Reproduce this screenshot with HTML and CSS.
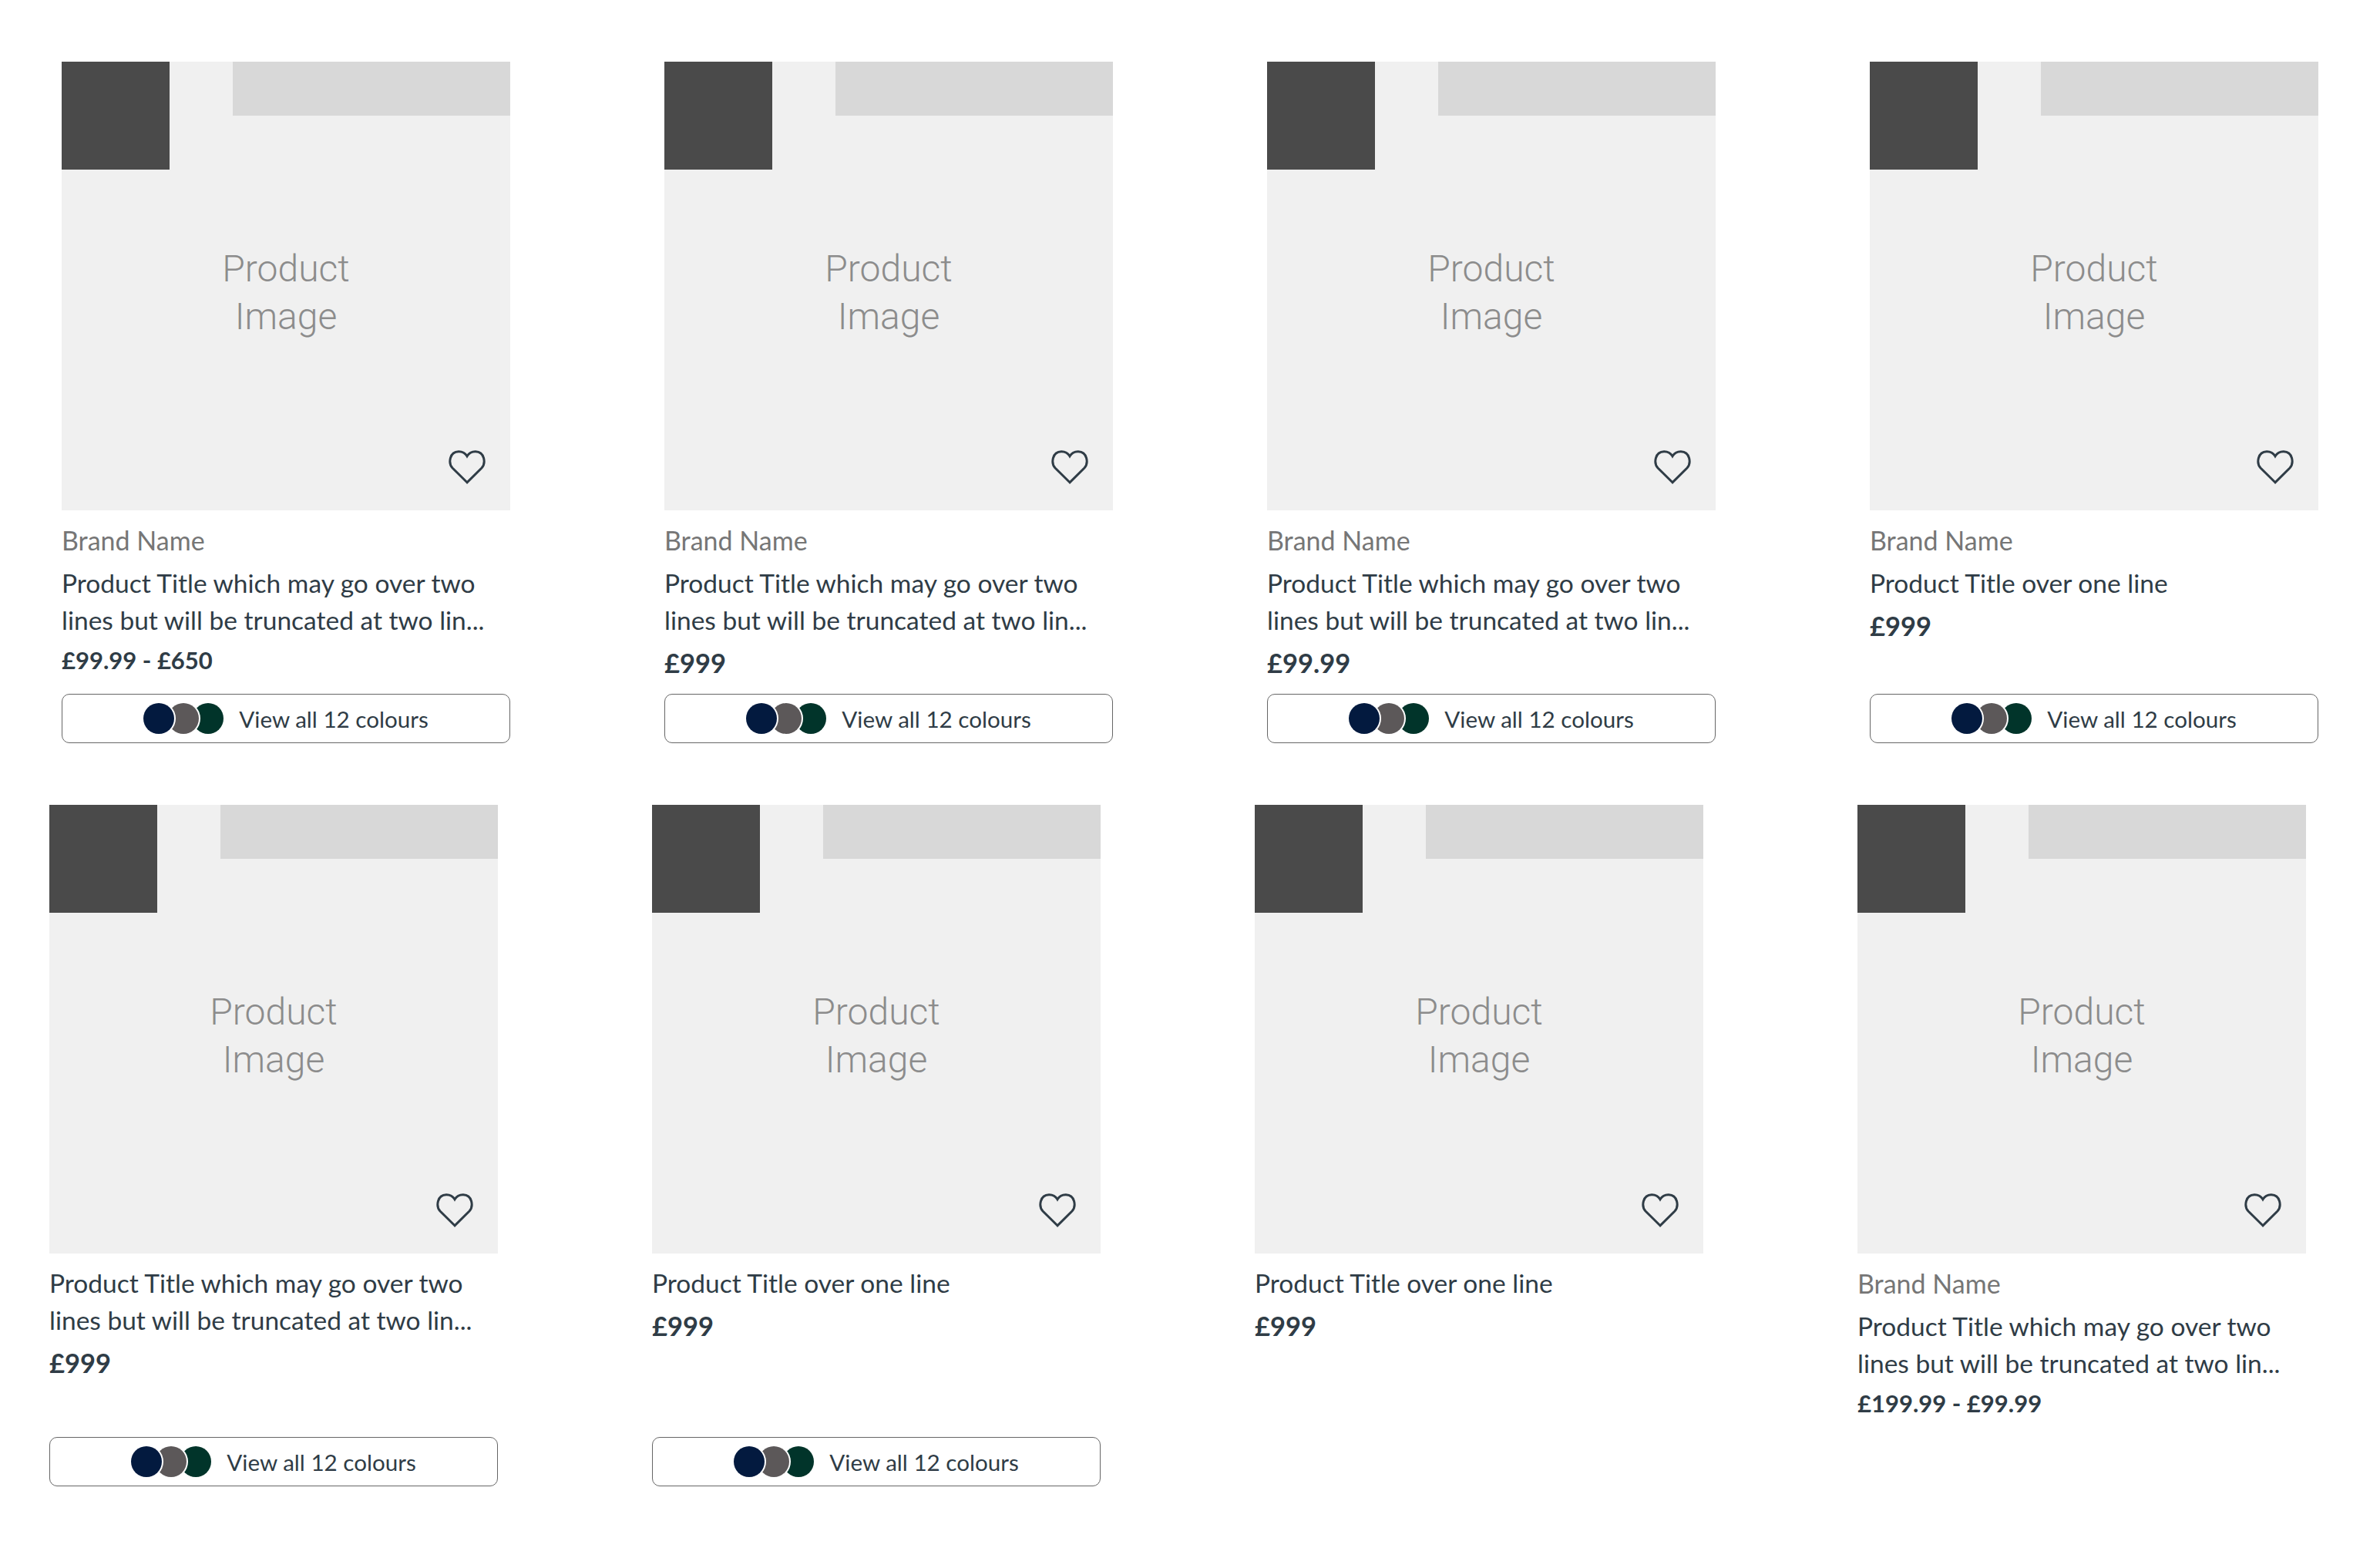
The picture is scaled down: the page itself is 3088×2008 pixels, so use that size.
FILE: index.html
```html
<!DOCTYPE html>
<html lang="en">
<head>
    <meta charset="UTF-8">
    <title>Product Cards</title>
    <link rel="stylesheet" href="styles.css">
</head>
<body>
    <section class="row">
        <article class="card">
            <div class="media">
                <div class="media-tags"><span class="tag-dark"></span><span class="tag-light"></span></div>
                <div class="media-label">Product<br>Image</div>
                <svg class="heart" viewBox="0 0 48 44"><path d="M24 41.8 5 23C-.5 17 1 2 13 1.8c5-.1 9 2.700 11 6 2-3.300 6-6.100 11-6C47 2 48.500 17 43 23Z"/></svg>
            </div>
            <div class="info">
                <div class="brand">Brand Name</div>
                <div class="title">Product Title which may go over two<br>lines but will be truncated at two lin...</div>
                <div class="price price-small">£99.99 - £650</div>
            </div>
            <a class="swatch-btn"><span class="dots"><i class="dot navy"></i><i class="dot grey"></i><i class="dot green"></i></span>View all 12 colours</a>
        </article>
        <article class="card">
            <div class="media">
                <div class="media-tags"><span class="tag-dark"></span><span class="tag-light"></span></div>
                <div class="media-label">Product<br>Image</div>
                <svg class="heart" viewBox="0 0 48 44"><path d="M24 41.8 5 23C-.5 17 1 2 13 1.8c5-.1 9 2.700 11 6 2-3.300 6-6.100 11-6C47 2 48.500 17 43 23Z"/></svg>
            </div>
            <div class="info">
                <div class="brand">Brand Name</div>
                <div class="title">Product Title which may go over two<br>lines but will be truncated at two lin...</div>
                <div class="price">£999</div>
            </div>
            <a class="swatch-btn"><span class="dots"><i class="dot navy"></i><i class="dot grey"></i><i class="dot green"></i></span>View all 12 colours</a>
        </article>
        <article class="card">
            <div class="media">
                <div class="media-tags"><span class="tag-dark"></span><span class="tag-light"></span></div>
                <div class="media-label">Product<br>Image</div>
                <svg class="heart" viewBox="0 0 48 44"><path d="M24 41.8 5 23C-.5 17 1 2 13 1.8c5-.1 9 2.700 11 6 2-3.300 6-6.100 11-6C47 2 48.500 17 43 23Z"/></svg>
            </div>
            <div class="info">
                <div class="brand">Brand Name</div>
                <div class="title">Product Title which may go over two<br>lines but will be truncated at two lin...</div>
                <div class="price">£99.99</div>
            </div>
            <a class="swatch-btn"><span class="dots"><i class="dot navy"></i><i class="dot grey"></i><i class="dot green"></i></span>View all 12 colours</a>
        </article>
        <article class="card">
            <div class="media">
                <div class="media-tags"><span class="tag-dark"></span><span class="tag-light"></span></div>
                <div class="media-label">Product<br>Image</div>
                <svg class="heart" viewBox="0 0 48 44"><path d="M24 41.8 5 23C-.5 17 1 2 13 1.8c5-.1 9 2.700 11 6 2-3.300 6-6.100 11-6C47 2 48.500 17 43 23Z"/></svg>
            </div>
            <div class="info">
                <div class="brand">Brand Name</div>
                <div class="title">Product Title over one line</div>
                <div class="price">£999</div>
            </div>
            <a class="swatch-btn"><span class="dots"><i class="dot navy"></i><i class="dot grey"></i><i class="dot green"></i></span>View all 12 colours</a>
        </article>
    </section>

    <section class="row row-second">
        <article class="card">
            <div class="media">
                <div class="media-tags"><span class="tag-dark"></span><span class="tag-light"></span></div>
                <div class="media-label">Product<br>Image</div>
                <svg class="heart" viewBox="0 0 48 44"><path d="M24 41.8 5 23C-.5 17 1 2 13 1.8c5-.1 9 2.700 11 6 2-3.300 6-6.100 11-6C47 2 48.500 17 43 23Z"/></svg>
            </div>
            <div class="info">
                <div class="title">Product Title which may go over two<br>lines but will be truncated at two lin...</div>
                <div class="price">£999</div>
            </div>
            <a class="swatch-btn"><span class="dots"><i class="dot navy"></i><i class="dot grey"></i><i class="dot green"></i></span>View all 12 colours</a>
        </article>
        <article class="card">
            <div class="media">
                <div class="media-tags"><span class="tag-dark"></span><span class="tag-light"></span></div>
                <div class="media-label">Product<br>Image</div>
                <svg class="heart" viewBox="0 0 48 44"><path d="M24 41.8 5 23C-.5 17 1 2 13 1.8c5-.1 9 2.700 11 6 2-3.300 6-6.100 11-6C47 2 48.500 17 43 23Z"/></svg>
            </div>
            <div class="info">
                <div class="title">Product Title over one line</div>
                <div class="price">£999</div>
            </div>
            <a class="swatch-btn"><span class="dots"><i class="dot navy"></i><i class="dot grey"></i><i class="dot green"></i></span>View all 12 colours</a>
        </article>
        <article class="card">
            <div class="media">
                <div class="media-tags"><span class="tag-dark"></span><span class="tag-light"></span></div>
                <div class="media-label">Product<br>Image</div>
                <svg class="heart" viewBox="0 0 48 44"><path d="M24 41.8 5 23C-.5 17 1 2 13 1.8c5-.1 9 2.700 11 6 2-3.300 6-6.100 11-6C47 2 48.500 17 43 23Z"/></svg>
            </div>
            <div class="info">
                <div class="title">Product Title over one line</div>
                <div class="price">£999</div>
            </div>
        </article>
        <article class="card">
            <div class="media">
                <div class="media-tags"><span class="tag-dark"></span><span class="tag-light"></span></div>
                <div class="media-label">Product<br>Image</div>
                <svg class="heart" viewBox="0 0 48 44"><path d="M24 41.8 5 23C-.5 17 1 2 13 1.8c5-.1 9 2.700 11 6 2-3.300 6-6.100 11-6C47 2 48.500 17 43 23Z"/></svg>
            </div>
            <div class="info">
                <div class="brand">Brand Name</div>
                <div class="title">Product Title which may go over two<br>lines but will be truncated at two lin...</div>
                <div class="price price-small">£199.99 - £99.99</div>
            </div>
        </article>
    </section>
</body>
</html>
```

FILE: styles.css
```css
body {
    margin: 0;
    background: #fff;
    color: #2f3c46;
    font-family: "Lato", "Noto Sans", sans-serif;
}

.row {
    display: grid;
    grid-template-columns: repeat(4, 582px);
    column-gap: 200px;
    padding: 80px 0 0 80px;
}

.row-second {
    padding-left: 64px;
}

.card {
    display: flex;
    flex-direction: column;
}

.media {
    position: relative;
    height: 582px;
    background: #f0f0f0;
}

.media-tags {
    display: flex;
    justify-content: space-between;
    align-items: flex-start;
}

.tag-dark {
    width: 140px;
    height: 140px;
    background: #4a4a4a;
}

.tag-light {
    width: 360px;
    height: 70px;
    background: #d8d8d8;
}

.media-label {
    margin-top: 98px;
    font-family: "Roboto", sans-serif;
    font-weight: 300;
    font-size: 48px;
    line-height: 62px;
    text-align: center;
    color: #8c8c8c;
}

.heart {
    position: absolute;
    right: 32px;
    bottom: 34px;
    width: 48px;
    height: 44px;
    fill: none;
    stroke: #2f3c46;
    stroke-width: 3;
}

.info {
    box-sizing: border-box;
    min-height: 238px;
    padding-top: 14px;
}

.brand {
    margin: 5px 0 11px;
    font-size: 34px;
    line-height: 40px;
    color: #767676;
}

.title {
    font-size: 33.500px;
    line-height: 48px;
    white-space: nowrap;
}

.price {
    margin-top: 8px;
    font-size: 34.500px;
    line-height: 48px;
    font-weight: 700;
}

.price-small {
    margin-top: 4px;
    font-size: 31px;
}

.swatch-btn {
    box-sizing: border-box;
    display: flex;
    align-items: center;
    justify-content: center;
    gap: 20px;
    height: 64px;
    border: 1px solid #666;
    border-radius: 10px;
    font-size: 29.600px;
}

.dots {
    display: flex;
}

.dot {
    position: relative;
    width: 40px;
    height: 40px;
    border-radius: 50%;
    box-shadow: 0 0 0 2px #fff;
}

.dot + .dot {
    margin-left: -8px;
}

.navy {
    z-index: 3;
    background: #031a3f;
}

.grey {
    z-index: 2;
    background: #5c5859;
}

.green {
    z-index: 1;
    background: #01342a;
}
```
